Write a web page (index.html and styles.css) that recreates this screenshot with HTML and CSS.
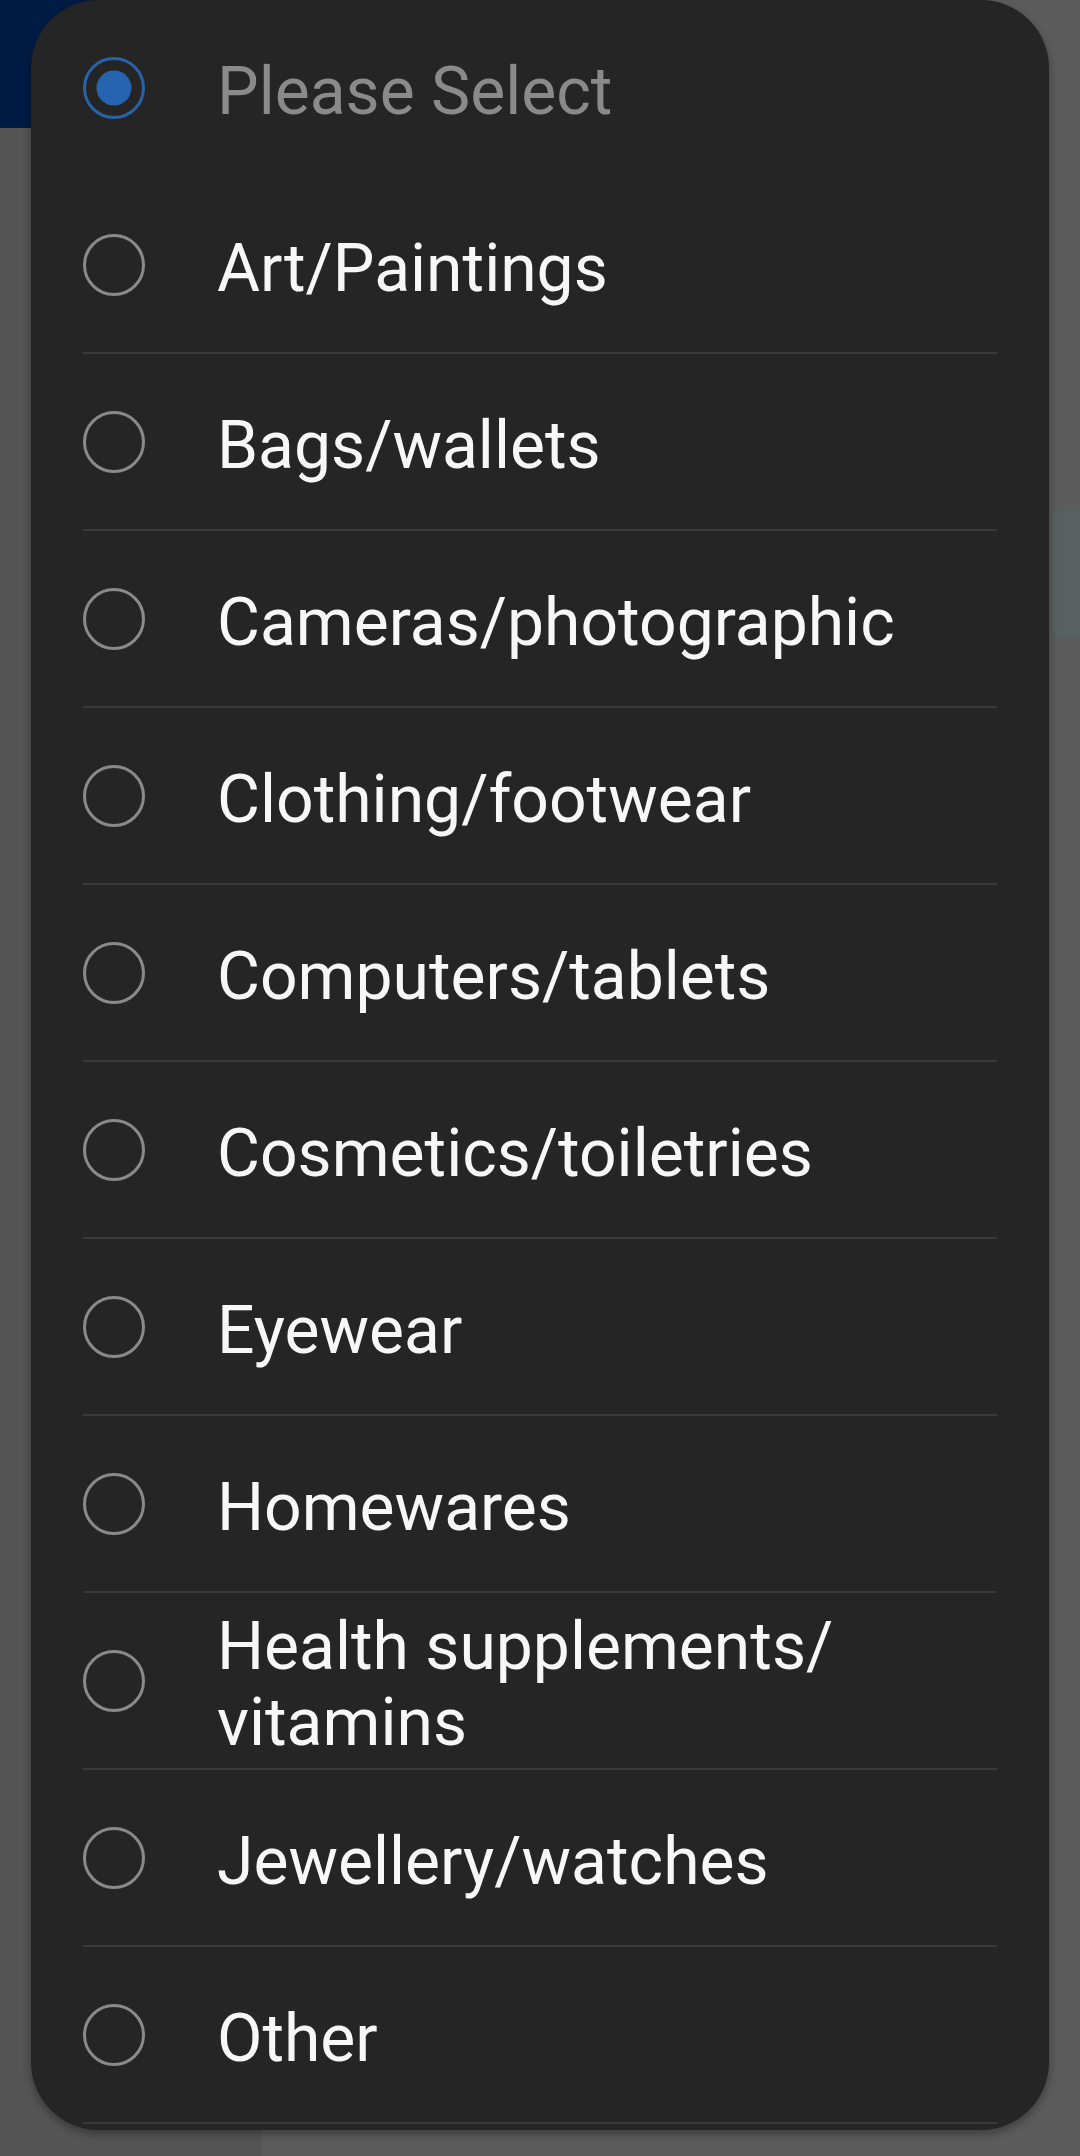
FILE: index.html
```html
<!DOCTYPE html>
<html lang="en">
<head>
<meta charset="utf-8">
<title>Please Select</title>
<link rel="stylesheet" href="styles.css">
</head>
<body>
<div class="backdrop">
  <div class="side">
    <div class="appbar"></div>
  </div>
  <div class="main">
    <div class="card-edge"></div>
  </div>
</div>

<div class="dialog" role="radiogroup">
  <div class="option first selected">
    <svg class="radio" viewBox="0 0 62 62"><circle cx="31" cy="31" r="29.5" class="ring-on"/><circle cx="31" cy="31" r="17.5" class="dot"/></svg>
    <span class="label placeholder">Please Select</span>
  </div>
  <div class="option">
    <svg class="radio" viewBox="0 0 62 62"><circle cx="31" cy="31" r="29.5" class="ring"/></svg>
    <span class="label">Art/Paintings</span>
  </div>
  <div class="option">
    <svg class="radio" viewBox="0 0 62 62"><circle cx="31" cy="31" r="29.5" class="ring"/></svg>
    <span class="label">Bags/wallets</span>
  </div>
  <div class="option">
    <svg class="radio" viewBox="0 0 62 62"><circle cx="31" cy="31" r="29.5" class="ring"/></svg>
    <span class="label">Cameras/photographic</span>
  </div>
  <div class="option">
    <svg class="radio" viewBox="0 0 62 62"><circle cx="31" cy="31" r="29.5" class="ring"/></svg>
    <span class="label">Clothing/footwear</span>
  </div>
  <div class="option">
    <svg class="radio" viewBox="0 0 62 62"><circle cx="31" cy="31" r="29.5" class="ring"/></svg>
    <span class="label">Computers/tablets</span>
  </div>
  <div class="option">
    <svg class="radio" viewBox="0 0 62 62"><circle cx="31" cy="31" r="29.5" class="ring"/></svg>
    <span class="label">Cosmetics/toiletries</span>
  </div>
  <div class="option">
    <svg class="radio" viewBox="0 0 62 62"><circle cx="31" cy="31" r="29.5" class="ring"/></svg>
    <span class="label">Eyewear</span>
  </div>
  <div class="option">
    <svg class="radio" viewBox="0 0 62 62"><circle cx="31" cy="31" r="29.5" class="ring"/></svg>
    <span class="label">Homewares</span>
  </div>
  <div class="option">
    <svg class="radio" viewBox="0 0 62 62"><circle cx="31" cy="31" r="29.5" class="ring"/></svg>
    <span class="label">Health supplements/<wbr>vitamins</span>
  </div>
  <div class="option">
    <svg class="radio" viewBox="0 0 62 62"><circle cx="31" cy="31" r="29.5" class="ring"/></svg>
    <span class="label">Jewellery/watches</span>
  </div>
  <div class="option">
    <svg class="radio" viewBox="0 0 62 62"><circle cx="31" cy="31" r="29.5" class="ring"/></svg>
    <span class="label">Other</span>
  </div>
</div>
</body>
</html>
```
FILE: styles.css
```css
html, body {
  margin: 0;
  padding: 0;
}
body {
  width: 1080px;
  height: 2156px;
  overflow: hidden;
  position: relative;
  background: #5c5c5c;
  font-family: Roboto, "Noto Sans", "Liberation Sans", sans-serif;
}
.backdrop {
  display: flex;
  height: 2156px;
}
.side {
  width: 262px;
  background: #555555;
}
.appbar {
  height: 128px;
  background: #001c44;
}
.main {
  flex: 1;
  background: #5c5c5c;
  padding-top: 510px;
  display: flex;
  justify-content: flex-end;
}
.card-edge {
  width: 26px;
  height: 127px;
  background: #586060;
}
.dialog {
  position: absolute;
  left: 31px;
  top: 0;
  width: 1018px;
  height: 2130px;
  box-sizing: border-box;
  background: #252525;
  border-radius: 68px;
  box-shadow: 0 4px 10px rgba(0, 0, 0, 0.35);
  padding: 0 52px;
  display: flex;
  flex-direction: column;
}
.option {
  height: 177px;
  box-sizing: border-box;
  display: flex;
  align-items: center;
  border-bottom: 2px solid #393939;
  flex-shrink: 0;
}
.option.first {
  border-bottom-color: transparent;
}
.radio {
  width: 62px;
  height: 62px;
  flex-shrink: 0;
}
.ring {
  fill: none;
  stroke: #8a8a8a;
  stroke-width: 3;
}
.ring-on {
  fill: none;
  stroke: #2862a8;
  stroke-width: 3;
}
.dot {
  fill: #2664b2;
}
.label {
  margin-left: 72px;
  padding-top: 8px;
  font-size: 66px;
  line-height: 76px;
  color: #f7f7f7;
  flex: 1;
}
.placeholder {
  color: #8a8a8a;
}
```
